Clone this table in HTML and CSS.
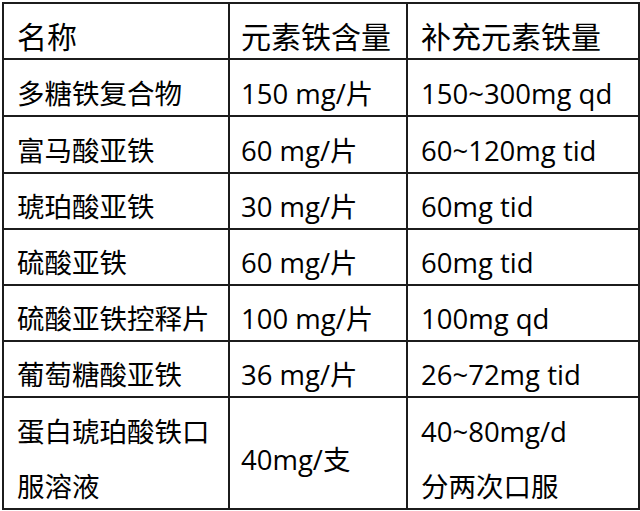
FILE: index.html
```html
<!DOCTYPE html>
<html lang="zh-CN">
<head>
<meta charset="utf-8">
<link rel="stylesheet" href="styles.css">
</head>
<body>
<table class="iron">
  <colgroup>
    <col class="c1"><col class="c2"><col class="c3">
  </colgroup>
  <thead>
    <tr class="head">
      <th><div class="t">名称</div></th>
      <th><div class="t">元素铁含量</div></th>
      <th><div class="t">补充元素铁量</div></th>
    </tr>
  </thead>
  <tbody>
    <tr class="r57"><td><div class="t">多糖铁复合物</div></td><td><div class="t">150 mg/片</div></td><td><div class="t">150~300mg qd</div></td></tr>
    <tr class="r57"><td><div class="t">富马酸亚铁</div></td><td><div class="t">60 mg/片</div></td><td><div class="t">60~120mg tid</div></td></tr>
    <tr><td><div class="t">琥珀酸亚铁</div></td><td><div class="t">30 mg/片</div></td><td><div class="t">60mg tid</div></td></tr>
    <tr><td><div class="t">硫酸亚铁</div></td><td><div class="t">60 mg/片</div></td><td><div class="t">60mg tid</div></td></tr>
    <tr><td><div class="t">硫酸亚铁控释片</div></td><td><div class="t">100 mg/片</div></td><td><div class="t">100mg qd</div></td></tr>
    <tr><td><div class="t">葡萄糖酸亚铁</div></td><td><div class="t">36 mg/片</div></td><td><div class="t">26~72mg tid</div></td></tr>
    <tr class="tall"><td><div class="t">蛋白琥珀酸铁口服溶液</div></td><td><div class="t">40mg/支</div></td><td><div class="t">40~80mg/d<br>分两次口服</div></td></tr>
  </tbody>
</table>
</body>
</html>
```
FILE: styles.css
```css
html, body {
  margin: 0;
  padding: 0;
  background: #ffffff;
}
body {
  padding: 2px 0 0 2px;
  font-family: "Open Sans", "Noto Sans CJK SC", sans-serif;
  color: #000000;
}
.iron {
  border-collapse: collapse;
  table-layout: fixed;
  width: 636px;
  box-shadow: 1px 1px 0 #b8b8b8;
}
.c1 { width: 226px; }
.c2 { width: 178px; }
.c3 { width: 232px; }
.iron th,
.iron td {
  border: 2px solid #1c1c1c;
  padding: 0 10px 0 13px;
  text-align: left;
  vertical-align: middle;
  font-weight: 400;
  font-size: 27.5px;
  line-height: 54px;
  white-space: normal;
}
.iron th {
  font-size: 30px;
}
.iron td:nth-child(2) { padding-left: 11px; }
.iron th:nth-child(2) { padding-left: 11px; }
.head { height: 56px; }
.iron tbody tr { height: 56px; }
.iron tbody tr.r57 { height: 57px; }
.iron tbody tr.tall td { line-height: 55px; }
.iron tbody tr.tall { height: 111px; }
.t {
  margin: 6px 0 -6px;
}
```
